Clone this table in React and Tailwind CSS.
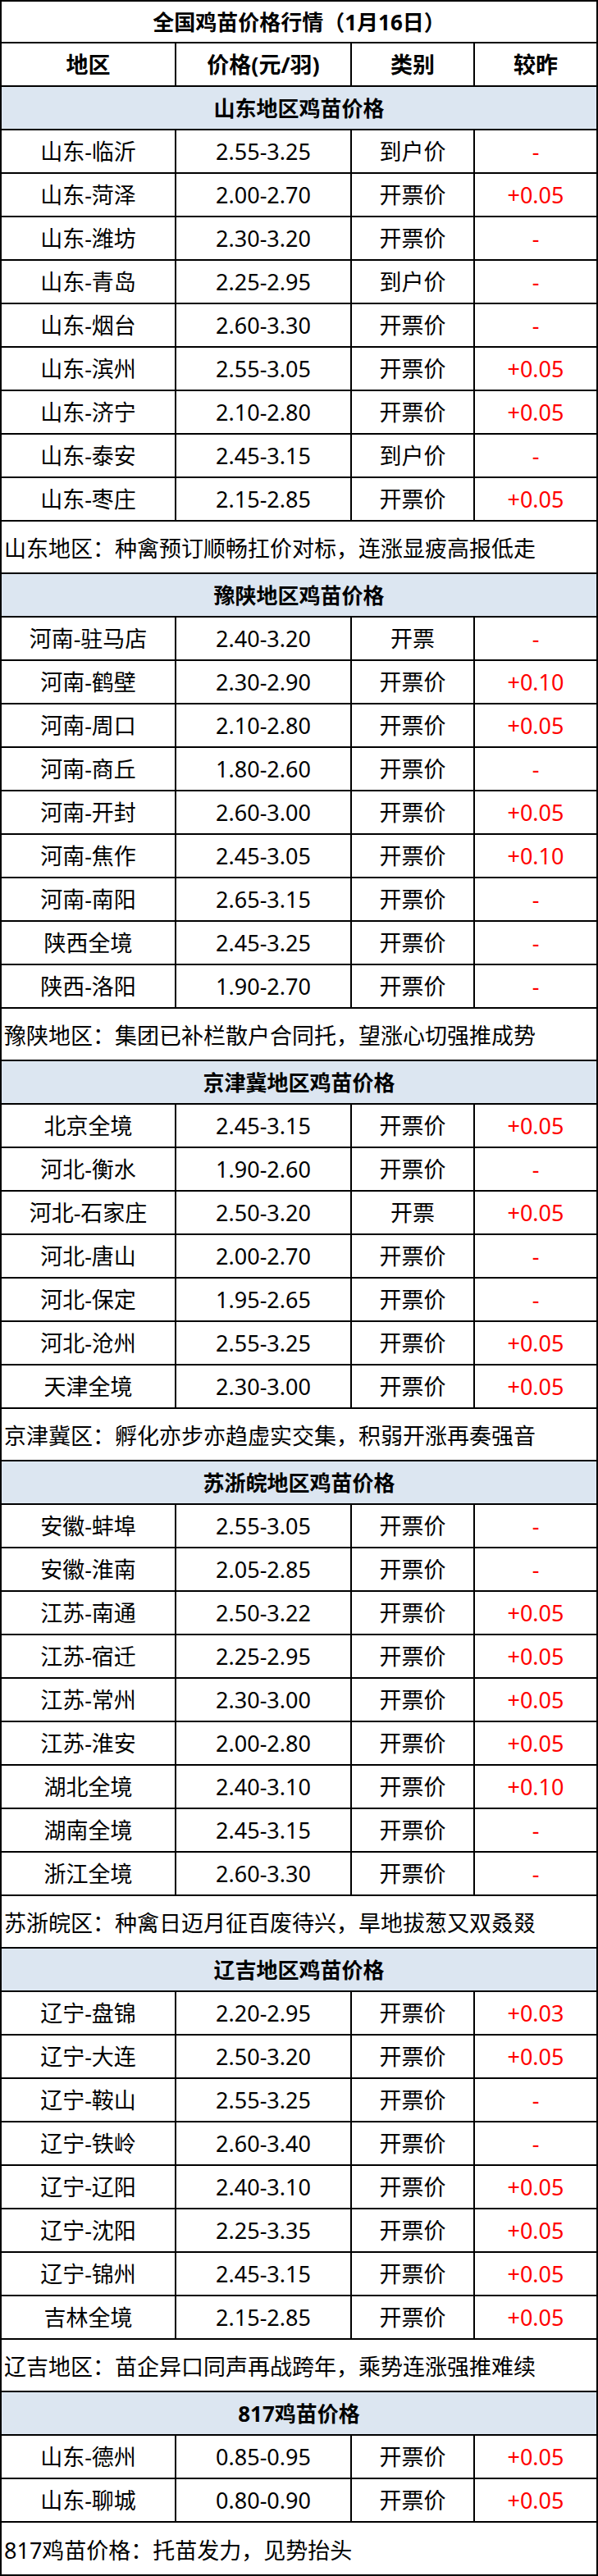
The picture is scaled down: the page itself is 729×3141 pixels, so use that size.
const sections = [
  {
    title: "山东地区鸡苗价格",
    rows: [
      ["山东-临沂", "2.55-3.25", "到户价", "-"],
      ["山东-菏泽", "2.00-2.70", "开票价", "+0.05"],
      ["山东-潍坊", "2.30-3.20", "开票价", "-"],
      ["山东-青岛", "2.25-2.95", "到户价", "-"],
      ["山东-烟台", "2.60-3.30", "开票价", "-"],
      ["山东-滨州", "2.55-3.05", "开票价", "+0.05"],
      ["山东-济宁", "2.10-2.80", "开票价", "+0.05"],
      ["山东-泰安", "2.45-3.15", "到户价", "-"],
      ["山东-枣庄", "2.15-2.85", "开票价", "+0.05"],
    ],
    note: "山东地区：种禽预订顺畅扛价对标，连涨显疲高报低走",
  },
  {
    title: "豫陕地区鸡苗价格",
    rows: [
      ["河南-驻马店", "2.40-3.20", "开票", "-"],
      ["河南-鹤壁", "2.30-2.90", "开票价", "+0.10"],
      ["河南-周口", "2.10-2.80", "开票价", "+0.05"],
      ["河南-商丘", "1.80-2.60", "开票价", "-"],
      ["河南-开封", "2.60-3.00", "开票价", "+0.05"],
      ["河南-焦作", "2.45-3.05", "开票价", "+0.10"],
      ["河南-南阳", "2.65-3.15", "开票价", "-"],
      ["陕西全境", "2.45-3.25", "开票价", "-"],
      ["陕西-洛阳", "1.90-2.70", "开票价", "-"],
    ],
    note: "豫陕地区：集团已补栏散户合同托，望涨心切强推成势",
  },
  {
    title: "京津冀地区鸡苗价格",
    rows: [
      ["北京全境", "2.45-3.15", "开票价", "+0.05"],
      ["河北-衡水", "1.90-2.60", "开票价", "-"],
      ["河北-石家庄", "2.50-3.20", "开票", "+0.05"],
      ["河北-唐山", "2.00-2.70", "开票价", "-"],
      ["河北-保定", "1.95-2.65", "开票价", "-"],
      ["河北-沧州", "2.55-3.25", "开票价", "+0.05"],
      ["天津全境", "2.30-3.00", "开票价", "+0.05"],
    ],
    note: "京津冀区：孵化亦步亦趋虚实交集，积弱开涨再奏强音",
  },
  {
    title: "苏浙皖地区鸡苗价格",
    rows: [
      ["安徽-蚌埠", "2.55-3.05", "开票价", "-"],
      ["安徽-淮南", "2.05-2.85", "开票价", "-"],
      ["江苏-南通", "2.50-3.22", "开票价", "+0.05"],
      ["江苏-宿迁", "2.25-2.95", "开票价", "+0.05"],
      ["江苏-常州", "2.30-3.00", "开票价", "+0.05"],
      ["江苏-淮安", "2.00-2.80", "开票价", "+0.05"],
      ["湖北全境", "2.40-3.10", "开票价", "+0.10"],
      ["湖南全境", "2.45-3.15", "开票价", "-"],
      ["浙江全境", "2.60-3.30", "开票价", "-"],
    ],
    note: "苏浙皖区：种禽日迈月征百废待兴，旱地拔葱又双叒叕",
  },
  {
    title: "辽吉地区鸡苗价格",
    rows: [
      ["辽宁-盘锦", "2.20-2.95", "开票价", "+0.03"],
      ["辽宁-大连", "2.50-3.20", "开票价", "+0.05"],
      ["辽宁-鞍山", "2.55-3.25", "开票价", "-"],
      ["辽宁-铁岭", "2.60-3.40", "开票价", "-"],
      ["辽宁-辽阳", "2.40-3.10", "开票价", "+0.05"],
      ["辽宁-沈阳", "2.25-3.35", "开票价", "+0.05"],
      ["辽宁-锦州", "2.45-3.15", "开票价", "+0.05"],
      ["吉林全境", "2.15-2.85", "开票价", "+0.05"],
    ],
    note: "辽吉地区：苗企异口同声再战跨年，乘势连涨强推难续",
  },
  {
    title: "817鸡苗价格",
    rows: [
      ["山东-德州", "0.85-0.95", "开票价", "+0.05"],
      ["山东-聊城", "0.80-0.90", "开票价", "+0.05"],
    ],
    note: "817鸡苗价格：托苗发力，见势抬头",
  },
];

function Row({ cells, bold = false }) {
  const [region, price, kind, change] = cells;
  return (
    <div className={`flex h-[53px] border-b-2 border-black ${bold ? "font-bold" : ""}`}>
      <div className="flex w-[213px] shrink-0 items-center justify-center border-r-2 border-black">
        {region}
      </div>
      <div className="flex w-[214px] shrink-0 items-center justify-center border-r-2 border-black">
        {price}
      </div>
      <div className="flex w-[150px] shrink-0 items-center justify-center border-r-2 border-black">
        {kind}
      </div>
      <div className={`flex flex-1 items-center justify-center ${bold ? "" : "text-[#ff0000]"}`}>
        {change}
      </div>
    </div>
  );
}

export default function App() {
  return (
    <div className="w-[729px] border-2 border-black bg-white font-['Noto_Sans','Noto_Sans_CJK_SC',sans-serif] text-[27px] leading-none text-black">
      <div className="flex h-[51px] items-center justify-center border-b-2 border-black text-[26px] font-bold">
        全国鸡苗价格行情（1月16日）
      </div>
      <Row cells={["地区", "价格(元/羽)", "类别", "较昨"]} bold />
      {sections.map((section, i) => {
        const last = i === sections.length - 1;
        return (
          <div key={section.title}>
            <div className="flex h-[53px] items-center justify-center border-b-2 border-black bg-[#dce6f1] text-[26px] font-bold">
              {section.title}
            </div>
            {section.rows.map((row) => (
              <Row key={row[0]} cells={row} />
            ))}
            <div
              className={`flex items-center pl-[3px] pt-[3px] ${last ? "h-[63px]" : "h-[64px] border-b-2 border-black"}`}
            >
              {section.note}
            </div>
          </div>
        );
      })}
    </div>
  );
}
